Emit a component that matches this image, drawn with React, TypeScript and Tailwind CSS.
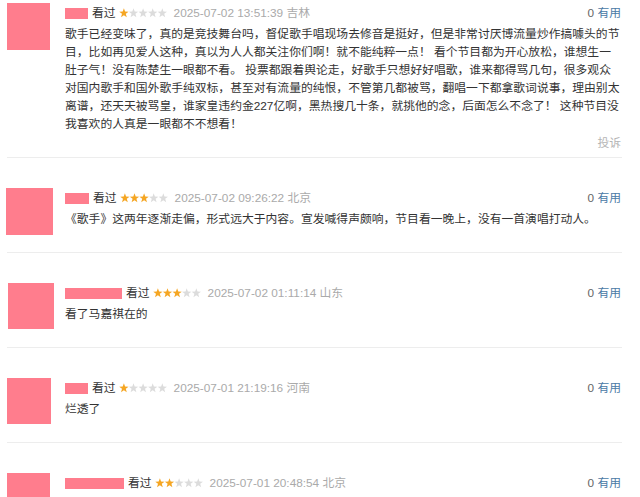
import React from "react";

type Item = {
  avatar: { w: number; h: number; ml: number };
  nameW: number;
  stars: number;
  date: string;
  lines: string[];
  showReport?: boolean;
};

const items: Item[] = [
  {
    avatar: { w: 43, h: 47, ml: 0 },
    nameW: 23,
    stars: 1,
    date: "2025-07-02 13:51:39 吉林",
    lines: [
      "歌手已经变味了，真的是竞技舞台吗，督促歌手唱现场去修音是挺好，但是非常讨厌博流量炒作搞噱头的节",
      "目，比如再见爱人这种，真以为人人都关注你们啊！就不能纯粹一点！ 看个节目都为开心放松，谁想生一",
      "肚子气！没有陈楚生一眼都不看。 投票都跟着舆论走，好歌手只想好好唱歌，谁来都得骂几句，很多观众",
      "对国内歌手和国外歌手纯双标，甚至对有流量的纯恨，不管第几都被骂，翻唱一下都拿歌词说事，理由别太",
      "离谱，还天天被骂皇，谁家皇违约金227亿啊，黑热搜几十条，就挑他的念，后面怎么不念了！ 这种节目没",
      "我喜欢的人真是一眼都不不想看！",
    ],
    showReport: true,
  },
  {
    avatar: { w: 47, h: 47, ml: -1 },
    nameW: 24,
    stars: 3,
    date: "2025-07-02 09:26:22 北京",
    lines: ["《歌手》这两年逐渐走偏，形式远大于内容。宣发喊得声颇响，节目看一晚上，没有一首演唱打动人。"],
  },
  {
    avatar: { w: 46, h: 46, ml: 1 },
    nameW: 57,
    stars: 3,
    date: "2025-07-02 01:11:14 山东",
    lines: ["看了马嘉祺在的"],
  },
  {
    avatar: { w: 44, h: 46, ml: 0 },
    nameW: 23,
    stars: 1,
    date: "2025-07-01 21:19:16 河南",
    lines: ["烂透了"],
  },
  {
    avatar: { w: 43, h: 46, ml: 0 },
    nameW: 59,
    stars: 2,
    date: "2025-07-01 20:48:54 北京",
    lines: [],
  },
];

function Stars({ n }: { n: number }) {
  const pts = (cx: number) => {
    const r1 = 4.9;
    const r2 = 2.0;
    const cy = 5.2;
    const arr: string[] = [];
    for (let i = 0; i < 10; i++) {
      const r = i % 2 === 0 ? r1 : r2;
      const a = (Math.PI / 5) * i - Math.PI / 2;
      arr.push(`${(cx + r * Math.cos(a)).toFixed(2)},${(cy + r * Math.sin(a)).toFixed(2)}`);
    }
    return arr.join(" ");
  };
  return (
    <svg width="48" height="10" viewBox="0 0 48 10" className="block">
      {[0, 1, 2, 3, 4].map((i) => (
        <polygon key={i} points={pts(4.9 + i * 9.6)} fill={i < n ? "#f5a623" : "#dcdcdc"} />
      ))}
    </svg>
  );
}

function Comment({ item, first }: { item: Item; first?: boolean }) {
  return (
    <div
      className={`flex border-b border-[#ededed] pb-[4px] ${first ? "-mt-[27px] pt-[30px]" : "pt-[30px]"}`}
    >
      <div className="w-[58px] shrink-0">
        <div
          className="bg-[#ff7d8d]"
          style={{ width: item.avatar.w, height: item.avatar.h, marginLeft: item.avatar.ml }}
        />
      </div>
      <div className="flex-1 min-w-0">
        <div className="flex h-[20px] items-center text-[11.8px] leading-[20px]">
          <div className="h-[11px] bg-[#ff7d8d]" style={{ width: item.nameW }} />
          <span className="ml-[4px] text-[#333]">看过</span>
          <span className="ml-[3px]">
            <Stars n={item.stars} />
          </span>
          <span className="ml-[7px] text-[#aaaaaa]">{item.date}</span>
          <span className="ml-auto mr-[1px] text-[#666]">
            0 <span className="text-[#4a7aa6]">有用</span>
          </span>
        </div>
        <div className="mt-[2px] min-h-[18px] text-[11.8px] leading-[18px] text-[#333]">
          {item.lines.map((l, i) => (
            <div key={i} className="whitespace-pre">
              {l}
            </div>
          ))}
        </div>
        <div
          className={`h-[20px] text-right text-[11.8px] leading-[20px] mr-[1px] text-[#b5b5b5] ${
            item.showReport ? "" : "invisible"
          }`}
        >
          投诉
        </div>
      </div>
    </div>
  );
}

export default function App() {
  return (
    <div
      className="h-[497px] w-[640px] overflow-hidden bg-white"
      style={{ fontFamily: '"Liberation Sans", Arial, "Noto Sans CJK SC", sans-serif' }}
    >
      <div className="ml-[7px] w-[615px]">
        {items.map((it, i) => (
          <Comment key={i} item={it} first={i === 0} />
        ))}
      </div>
    </div>
  );
}
